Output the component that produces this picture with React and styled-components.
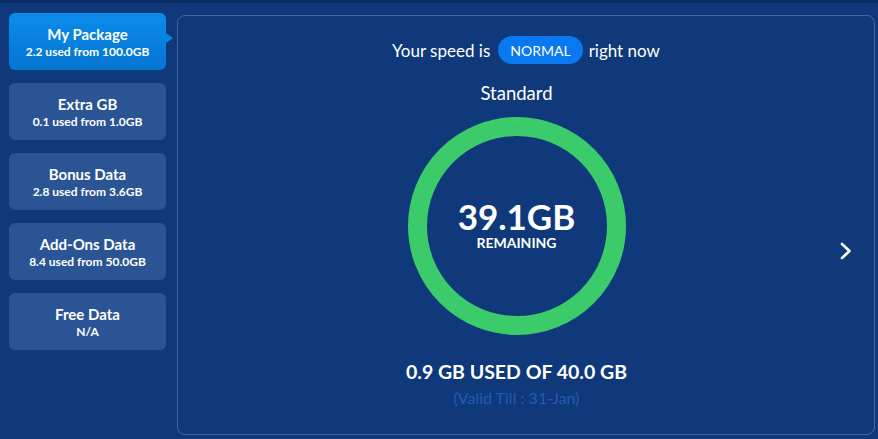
import React from 'react';
import styled, { createGlobalStyle } from 'styled-components';

const GlobalStyle = createGlobalStyle`
  html, body {
    margin: 0;
    padding: 0;
    background: #0f397a;
    font-family: Lato, "Open Sans", sans-serif;
  }
`;

const Page = styled.div`
  width: 878px;
  height: 439px;
  box-sizing: border-box;
  border-top: 3px solid #0c2e66;
  display: flex;
  align-items: flex-start;
  padding: 10px 3px 4px 9px;
  background: #0f397a;
`;

const Sidebar = styled.div`
  width: 157px;
  display: flex;
  flex-direction: column;
  gap: 13px;
  flex-shrink: 0;
`;

const Card = styled.div`
  position: relative;
  height: 57px;
  border-radius: 6px;
  display: flex;
  flex-direction: column;
  align-items: center;
  justify-content: center;
  gap: 1px;
  color: #fff;
  background: ${p => (p.$active ? 'linear-gradient(#0a8cec, #0575d2)' : '#2a5494')};

  ${p => p.$active && `
    &::after {
      content: '';
      position: absolute;
      right: -7px;
      top: 20px;
      border-left: 7px solid #0684e6;
      border-top: 5px solid transparent;
      border-bottom: 5px solid transparent;
    }
  `}
`;

const CardTitle = styled.div`
  font-size: 15px;
  font-weight: 700;
  line-height: 18px;
`;

const CardSub = styled.div`
  font-size: 12px;
  font-weight: 700;
  line-height: 15px;
`;

const Panel = styled.div`
  margin-left: 11px;
  margin-top: 2px;
  flex: 1;
  height: 420px;
  box-sizing: border-box;
  border: 1px solid rgba(140, 170, 220, 0.4);
  border-radius: 8px;
  display: flex;
  flex-direction: column;
  padding-top: 20px;
  color: #fff;
`;

const SpeedLine = styled.div`
  display: flex;
  align-items: center;
  justify-content: center;
  font-size: 17px;
  height: 28px;
`;

const Pill = styled.span`
  display: inline-flex;
  align-items: center;
  height: 28px;
  padding: 0 12px;
  margin: 0 6px 0 8px;
  border-radius: 14px;
  background: #0a78ee;
  font-size: 14px;
`;

const Body = styled.div`
  flex: 1;
  display: flex;
  align-items: flex-start;
`;

const Usage = styled.div`
  flex: 1;
  padding-left: 16px;
  display: flex;
  flex-direction: column;
  align-items: center;
`;

const PlanName = styled.div`
  font-size: 18.5px;
  line-height: 22px;
  margin-top: 18px;
`;

const Ring = styled.div`
  position: relative;
  width: 218px;
  height: 218px;
  margin-top: 13px;
  display: flex;
  flex-direction: column;
  align-items: center;
  justify-content: center;
  padding-bottom: 4px;
  box-sizing: border-box;

  svg {
    position: absolute;
    inset: 0;
  }
`;

const Amount = styled.div`
  font-size: 35px;
  font-weight: 700;
  line-height: 38px;
  position: relative;
`;

const AmountLabel = styled.div`
  font-size: 14px;
  font-weight: 700;
  line-height: 16px;
  position: relative;
`;

const UsedText = styled.div`
  font-size: 19.5px;
  font-weight: 700;
  line-height: 23px;
  margin-top: 25px;
`;

const Valid = styled.div`
  font-size: 16px;
  line-height: 19px;
  margin-top: 5px;
  color: #1f5db6;
`;

const Chevron = styled.div`
  width: 14px;
  margin: 178px 21px 0 0;
  display: flex;
`;

function App() {
  const cards = [
    { title: 'My Package', sub: '2.2 used from 100.0GB', active: true },
    { title: 'Extra GB', sub: '0.1 used from 1.0GB' },
    { title: 'Bonus Data', sub: '2.8 used from 3.6GB' },
    { title: 'Add-Ons Data', sub: '8.4 used from 50.0GB' },
    { title: 'Free Data', sub: 'N/A' },
  ];

  return (
    <>
      <GlobalStyle />
      <Page>
        <Sidebar>
          {cards.map(c => (
            <Card key={c.title} $active={c.active}>
              <CardTitle>{c.title}</CardTitle>
              <CardSub>{c.sub}</CardSub>
            </Card>
          ))}
        </Sidebar>
        <Panel>
          <SpeedLine>
            Your speed is <Pill>NORMAL</Pill> right now
          </SpeedLine>
          <Body>
            <Usage>
              <PlanName>Standard</PlanName>
              <Ring>
                <svg width="218" height="218" viewBox="0 0 218 218">
                  <circle cx="109" cy="109" r="99.5" fill="none" stroke="#3ccb6b" strokeWidth="19" />
                  <path d="M107.5 10 L109 13 L110.5 10 Z" fill="#35b962" />
                </svg>
                <Amount>39.1GB</Amount>
                <AmountLabel>REMAINING</AmountLabel>
              </Ring>
              <UsedText>0.9 GB USED OF 40.0 GB</UsedText>
              <Valid>(Valid Till : 31-Jan)</Valid>
            </Usage>
            <Chevron>
              <svg width="14" height="18" viewBox="0 0 14 18">
                <path d="M3 2 L10.5 9 L3 16" fill="none" stroke="#fff" strokeWidth="2.6" strokeLinecap="round" strokeLinejoin="round" />
              </svg>
            </Chevron>
          </Body>
        </Panel>
      </Page>
    </>
  );
}

export default App;
